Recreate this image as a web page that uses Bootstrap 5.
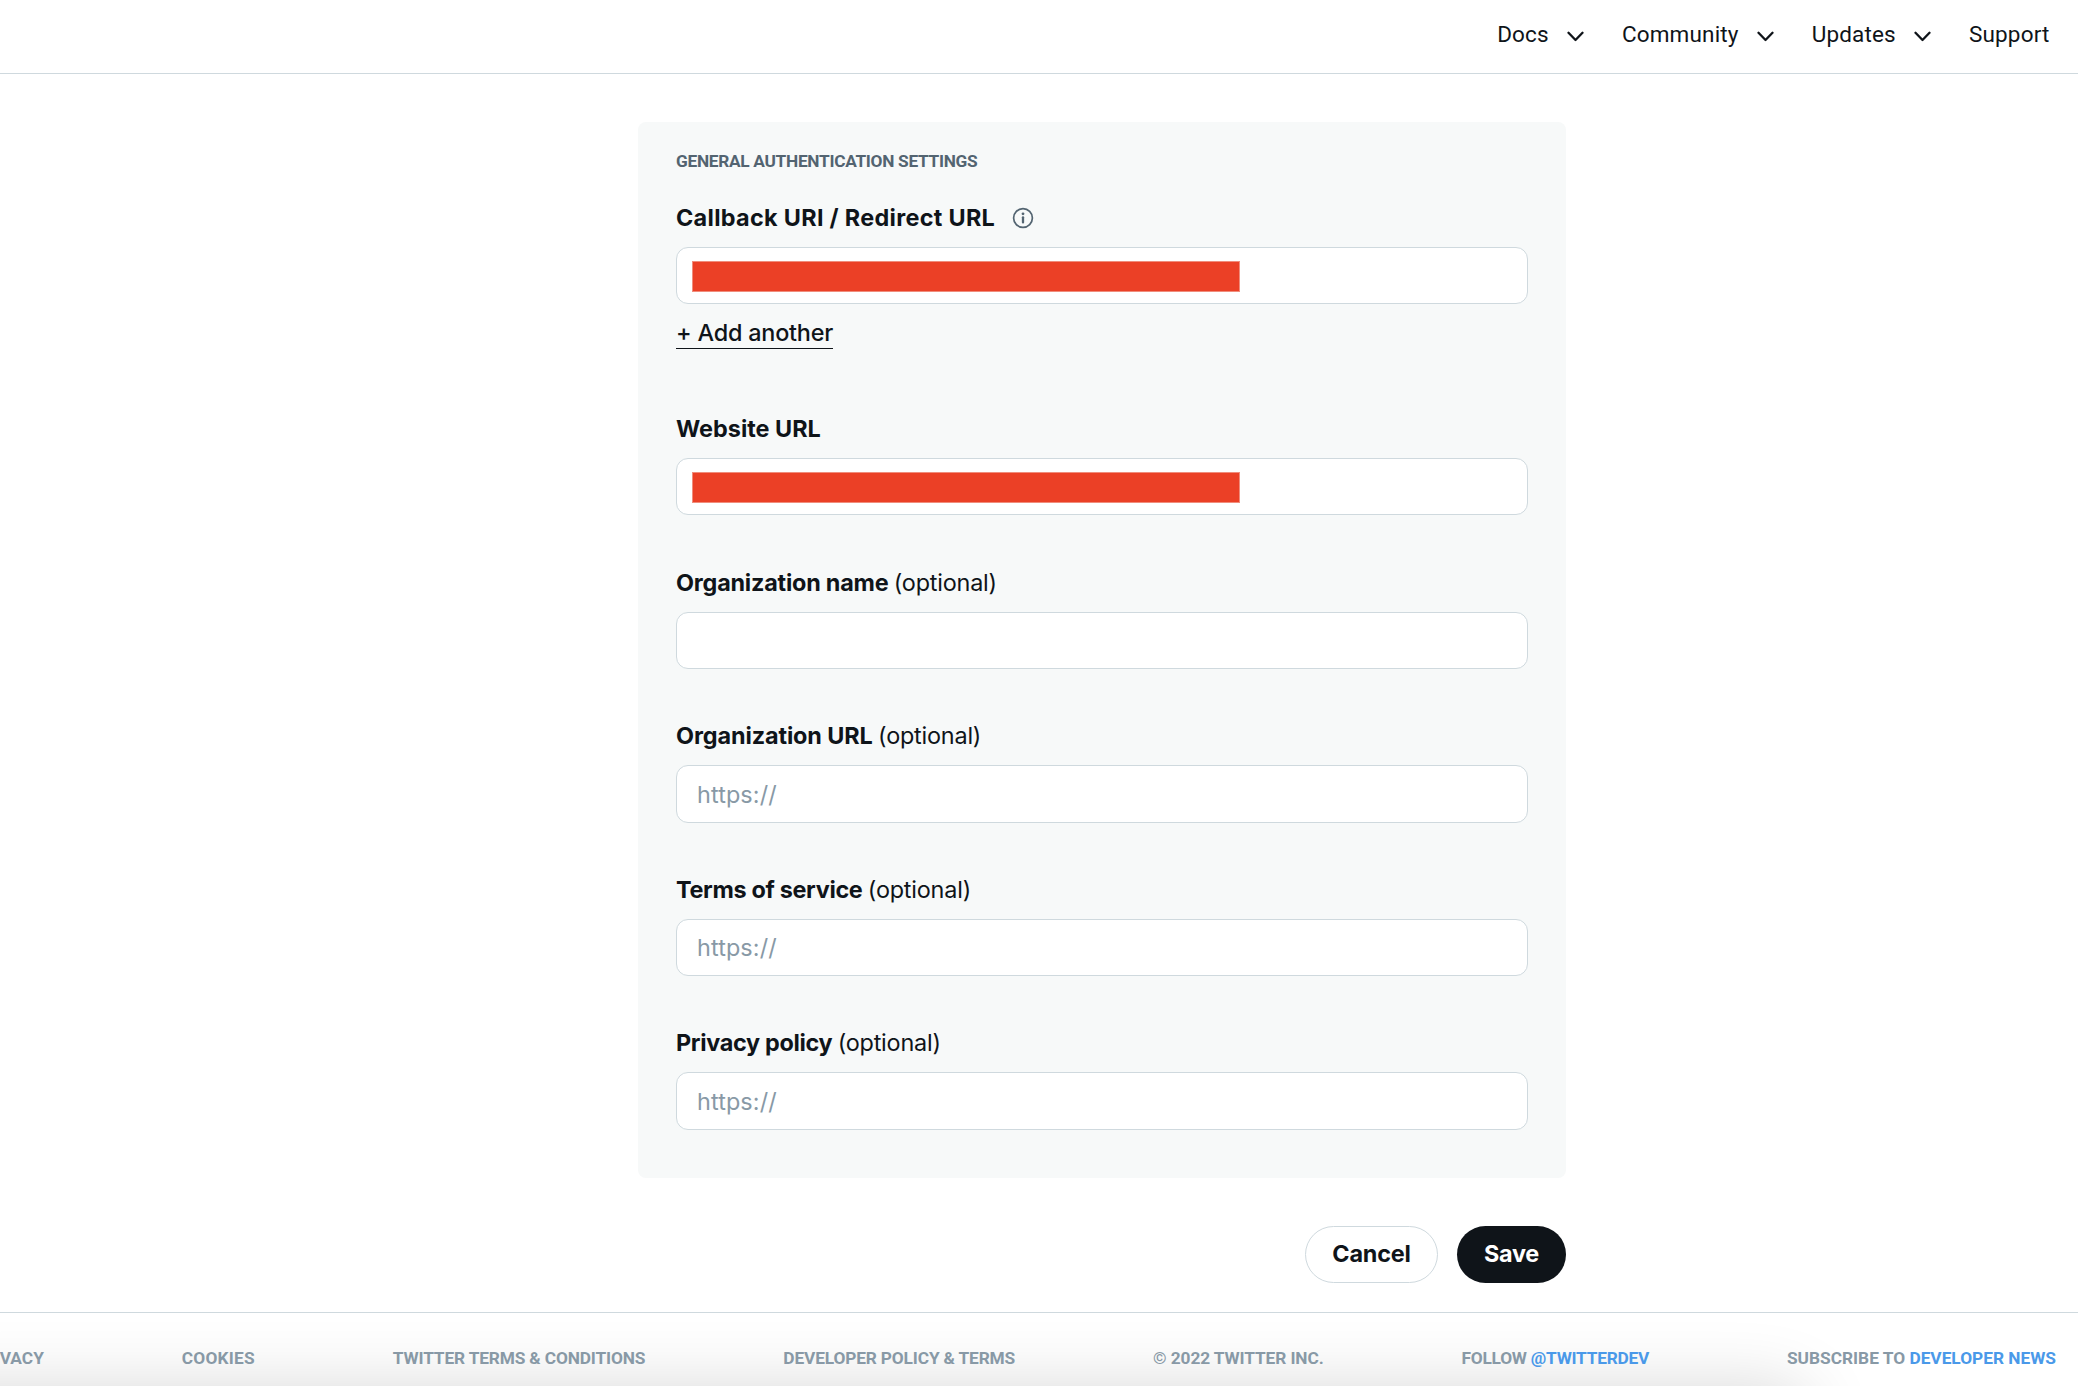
<!DOCTYPE html>
<html lang="en">
<head>
<meta charset="utf-8">
<meta name="viewport" content="width=device-width, initial-scale=1">
<title>Authentication settings</title>
<link href="https://cdn.jsdelivr.net/npm/bootstrap@5.3.0/dist/css/bootstrap.min.css" rel="stylesheet">
<style>
  body { color: #0f1419; font-family: Roboto, "Liberation Sans", sans-serif; height: 1386px; }
  .topnav { height: 74px; border-bottom: 1px solid #cfd9de; padding: 0 28.5px 5px 0; gap: 37.8px; }
  .topnav .nav-link { color: #0f1419; font-size: 22.5px; line-height: 28px; gap: 18.3px; letter-spacing: .16px; }
  .topnav svg { margin-top: 4px; }
  .settings { width: 928px; margin-left: 638px; padding-top: 48px; }
  .panel { height: 1056px; background: #f7f9f9; border-radius: 8px; padding: 27px 38px 48px; }
  .section-title { color: #536471; font-size: 17.3px; font-weight: 700; line-height: 24px; letter-spacing: -.3px; margin-bottom: 30px; }
  .field { margin-bottom: 52px; font-family: Inter, "Liberation Sans", sans-serif; }
  .field-label { display: flex; align-items: center; height: 30px; line-height: 30px; font-size: 23.4px; margin-bottom: 14px; white-space: pre; }
  .field-label strong { font-weight: 700; letter-spacing: -.32px; }
  .field-label .opt { letter-spacing: -.2px; word-spacing: -1px; }
  .field-label .ls-callback { letter-spacing: .31px; }
  .field-label .ls-site { letter-spacing: 0; }
  .field-label .ls-org { letter-spacing: -.21px; }
  .field-label .ls-orgurl { letter-spacing: -.1px; }
  .box { height: 57.5px; border: 1px solid #cfd9de; border-radius: 12px; font-size: 23.4px; letter-spacing: .12px; color: #0f1419; padding: 0 20px; background: #fff; }
  .box::placeholder { color: #8899a6; opacity: 1; }
  .box.filled { height: 57px; padding: 13px 15px; }
  .redacted { width: 548px; height: 31px; background: #eb4026; border: 1px solid #f08d7c; }
  .add-link { display: inline-block; margin-top: 13.5px; height: 31.5px; line-height: 30px; font-size: 23.4px; font-weight: 500; letter-spacing: -.2px; color: #0f1419; text-decoration: none; border-bottom: 1px solid #0f1419; }
  .with-add { height: 159px; }
  .site-field { margin-bottom: 52.8px; }
  .actions { margin-top: 48px; gap: 19px; }
  .actions .btn { height: 57px; font: 700 23.4px/30px Inter, "Liberation Sans", sans-serif; letter-spacing: -.2px; padding: 0 0 2px; border-radius: 29px; }
  .btn-cancel, .btn-cancel:hover { width: 133px; border: 1px solid #cfd9de; color: #0f1419; background: #fff; }
  .btn-save, .btn-save:hover { width: 109px; background: #0f1419; color: #fff; border: 0; }
  .footbar { position: relative; margin-top: 29px; height: 74px; border-top: 1px solid #cfd9de; padding: 33px 22px 0 0; gap: 138px; overflow: hidden; font-size: 17.3px; line-height: 24px; font-weight: 700; color: #8899a6; white-space: nowrap; }
  .footbar::before { content: ""; position: absolute; left: -80px; width: 1880px; top: 83px; height: 60px; border-radius: 20px; box-shadow: 0 0 70px 8px rgba(0,0,0,.16); }
  .footbar > * { position: relative; color: inherit; text-decoration: none; }
  .footbar .accent { color: #4a99e9; text-decoration: none; }
  .t-10 { letter-spacing: -.1px; }
  .t-15 { letter-spacing: -.14px; }
  .t-27 { letter-spacing: -.24px; }
  .t-20 { letter-spacing: .2px; }
</style>
<script src="https://cdn.jsdelivr.net/npm/bootstrap@5.3.0/dist/js/bootstrap.bundle.min.js"></script>
</head>
<body class="overflow-hidden bg-white">
<nav class="topnav d-flex justify-content-end align-items-center">
  <a class="nav-link d-flex align-items-center p-0" href="#">Docs
    <svg width="17" height="11" viewBox="0 0 17 11" fill="none" stroke="#0f1419" stroke-width="2.3" stroke-linecap="round" stroke-linejoin="round"><path d="M1.5 1.8 8.5 9l7-7.2"/></svg></a>
  <a class="nav-link d-flex align-items-center p-0" href="#">Community
    <svg width="17" height="11" viewBox="0 0 17 11" fill="none" stroke="#0f1419" stroke-width="2.3" stroke-linecap="round" stroke-linejoin="round"><path d="M1.5 1.8 8.5 9l7-7.2"/></svg></a>
  <a class="nav-link d-flex align-items-center p-0" href="#">Updates
    <svg width="17" height="11" viewBox="0 0 17 11" fill="none" stroke="#0f1419" stroke-width="2.3" stroke-linecap="round" stroke-linejoin="round"><path d="M1.5 1.8 8.5 9l7-7.2"/></svg></a>
  <a class="nav-link p-0" href="#">Support</a>
</nav>

<main class="settings">
  <form class="panel">
    <div class="section-title">GENERAL AUTHENTICATION SETTINGS</div>

    <div class="field with-add">
      <label class="field-label"><strong class="ls-callback">Callback URI / Redirect URL</strong><svg class="ms-3" width="23" height="22" viewBox="0 0 23 22" fill="none" stroke="#536471"><circle cx="12" cy="11" r="9.4" stroke-width="1.7"/><path d="M12 10.3v5.1" stroke-width="2.3" stroke-linecap="round"/><circle cx="12" cy="6.8" r="1.4" fill="#536471" stroke="none"/></svg></label>
      <div class="form-control box filled"><div class="redacted"></div></div>
      <a class="add-link" href="#">+ Add another</a>
    </div>

    <div class="field site-field">
      <label class="field-label"><strong class="ls-site">Website URL</strong></label>
      <div class="form-control box filled"><div class="redacted"></div></div>
    </div>

    <div class="field">
      <label class="field-label"><strong class="ls-org">Organization name</strong><span class="opt"> (optional)</span></label>
      <input class="form-control box" type="text">
    </div>

    <div class="field">
      <label class="field-label"><strong class="ls-orgurl">Organization URL</strong><span class="opt"> (optional)</span></label>
      <input class="form-control box" type="text" placeholder="https://">
    </div>

    <div class="field">
      <label class="field-label"><strong>Terms of service</strong><span class="opt"> (optional)</span></label>
      <input class="form-control box" type="text" placeholder="https://">
    </div>

    <div class="field mb-0">
      <label class="field-label"><strong>Privacy policy</strong><span class="opt"> (optional)</span></label>
      <input class="form-control box" type="text" placeholder="https://">
    </div>
  </form>

  <div class="actions d-flex justify-content-end">
    <button class="btn btn-cancel" type="button">Cancel</button>
    <button class="btn btn-save" type="button">Save</button>
  </div>
</main>

<footer class="footbar d-flex justify-content-end">
  <a href="#">PRIVACY</a>
  <a class="t-20" href="#">COOKIES</a>
  <a class="t-15" href="#">TWITTER TERMS &amp; CONDITIONS</a>
  <a class="t-15" href="#">DEVELOPER POLICY &amp; TERMS</a>
  <span class="t-10">© 2022 TWITTER INC.</span>
  <span class="t-27">FOLLOW <a class="accent" href="#">@TWITTERDEV</a></span>
  <span>SUBSCRIBE TO <a class="accent" href="#">DEVELOPER NEWS</a></span>
</footer>
</body>
</html>
